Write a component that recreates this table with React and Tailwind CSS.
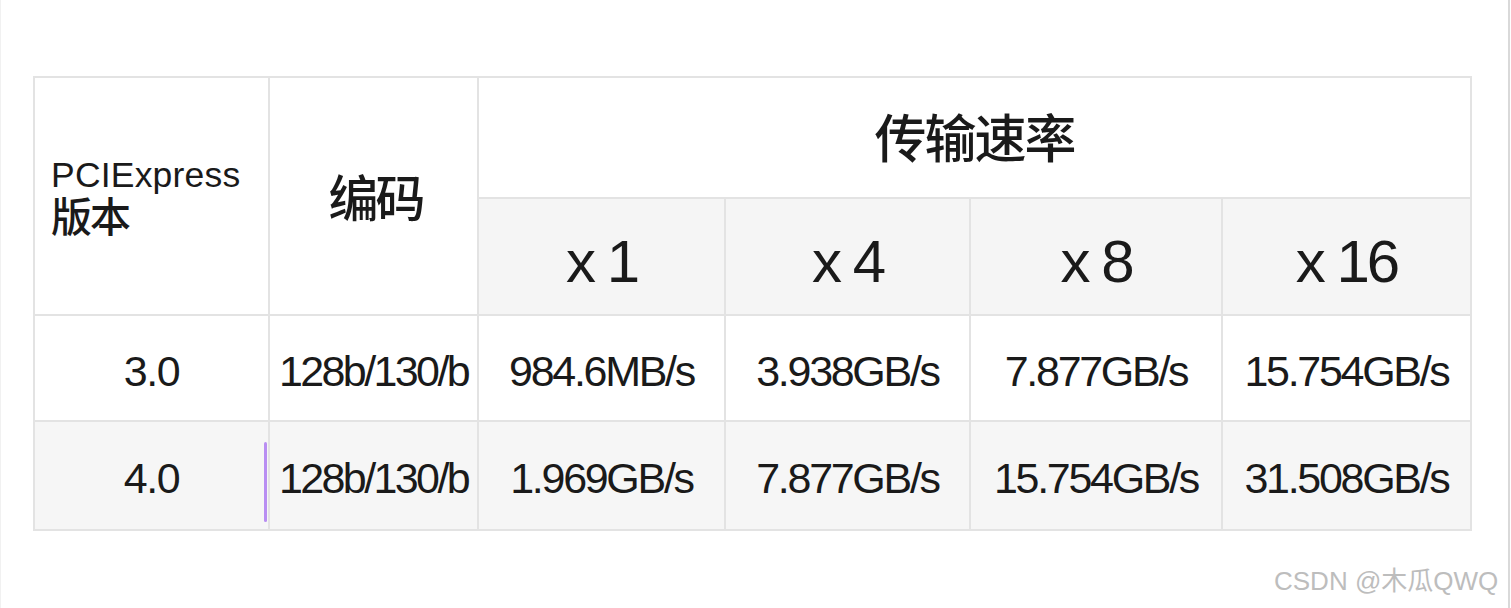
const font = { fontFamily: '"Liberation Sans", "Noto Sans CJK SC", sans-serif' };

const rows = [
  { ver: "3.0", enc: "128b/130/b", vals: ["984.6MB/s", "3.938GB/s", "7.877GB/s", "15.754GB/s"], shade: false },
  { ver: "4.0", enc: "128b/130/b", vals: ["1.969GB/s", "7.877GB/s", "15.754GB/s", "31.508GB/s"], shade: true },
];

const lanes = ["x 1", "x 4", "x 8", "x 16"];

function Cell({ children, className = "" }) {
  return (
    <div className={`flex items-center justify-center text-[#1a1a1a] ${className}`}>
      {children}
    </div>
  );
}

export default function App() {
  return (
    <div
      className="relative w-[1510px] h-[608px] bg-white border-r-2 border-[#d9d9d9] border-l border-l-[#f1f1f1]"
      style={font}
    >
      <div className="pl-[32px] pt-[76px]">
        <div className="grid w-max grid-cols-[233px_207px_245px_243px_250px_247px] grid-rows-[119px_115px_104px_107px] gap-[2px] bg-[#e3e3e3] p-[2px]">
          {/* header: version + encoding span both header rows */}
          <div className="row-span-2 flex flex-col justify-center bg-white pl-[16px] pt-[4px] text-[#1a1a1a]">
            <span className="text-[35.5px] leading-[40px] tracking-[0.2px]">PCIExpress</span>
            <span className="text-[41px] font-medium leading-[46px] tracking-[-2px]">版本</span>
          </div>
          <Cell className="row-span-2 bg-white pl-[4px] pt-[8px] text-[50px] font-medium tracking-[-3px]">编码</Cell>
          <Cell className="col-span-4 bg-white pt-[4px] text-[52px] font-medium tracking-[-2px]">传输速率</Cell>

          {lanes.map((l) => (
            <Cell key={l} className="bg-[#f5f5f5] pt-[10px] text-[60px] tracking-[-3px]">
              {l}
            </Cell>
          ))}

          {rows.map((r) => (
            <>
              <Cell
                key={r.ver}
                className={`relative pt-[6px] text-[43px] tracking-[-1.5px] ${r.shade ? "bg-[#f6f6f6]" : "bg-white"}`}
              >
                {r.ver}
                {r.shade && (
                  <span className="absolute right-[1px] top-[20px] h-[80px] w-[3px] rounded-full bg-[#b98ef2]" />
                )}
              </Cell>
              <Cell
                className={`pt-[6px] text-[43px] tracking-[-2.6px] ${r.shade ? "bg-[#f6f6f6]" : "bg-white"}`}
              >
                {r.enc}
              </Cell>
              {r.vals.map((v, i) => (
                <Cell
                  key={i}
                  className={`pt-[6px] text-[43px] tracking-[-2.3px] ${r.shade ? "bg-[#f6f6f6]" : "bg-white"}`}
                >
                  {v}
                </Cell>
              ))}
            </>
          ))}
        </div>
      </div>

      {/* watermark */}
      <div className="absolute left-[1273px] top-[564px] whitespace-nowrap text-[26px] leading-[34px] text-[#bdbdbd]">
        CSDN @木瓜QWQ
      </div>
    </div>
  );
}
